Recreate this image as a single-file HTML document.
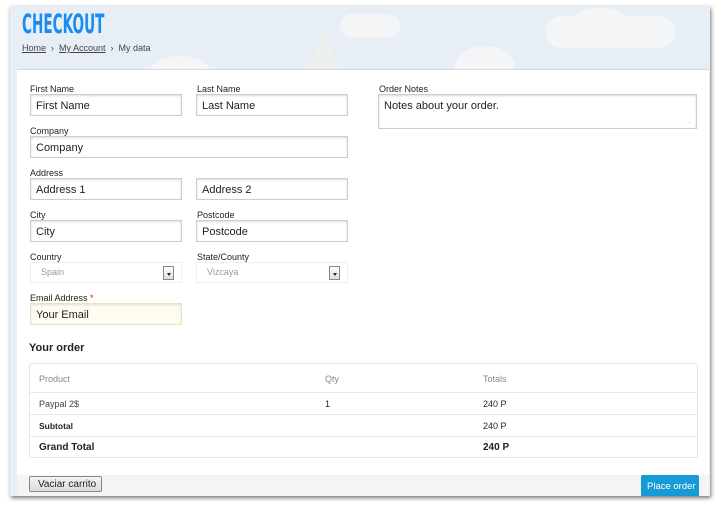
<!DOCTYPE html>
<html><head><style>
*{margin:0;padding:0;box-sizing:border-box}
body{width:720px;height:508px;background:#fff;font-family:"Liberation Sans",Arial,sans-serif;position:relative;overflow:hidden;font-size:9px;color:#222}
.win{position:absolute;left:10px;top:6px;width:700px;height:490px;background:#e8eef5;box-shadow:1px 2px 4px rgba(0,0,0,.55)}
.cloud{position:absolute;background:#f3f5f6;border-radius:20px}
.main{position:absolute;left:17px;top:69px;width:692px;height:427px;background:#fff;border-top:1px solid #d5dbe2}
.a{position:absolute}
h1{position:absolute;left:22px;top:10px;font-size:27px;line-height:30px;color:#1a8cf0;font-family:"DejaVu Sans Condensed","Liberation Sans Narrow",sans-serif;font-weight:bold;transform:scaleX(0.56);transform-origin:left top}
.bc{position:absolute;left:22px;top:43px;font-size:9px;color:#444}
.bc u{color:#444}
label{position:absolute;font-size:9px;color:#222}
.in{position:absolute;height:22px;border:1px solid #ccc;box-shadow:inset 0 1px 2px #ddd;font-size:11px;padding:5px 0 0 5px;color:#222;background:#fff}
.sel{position:absolute;height:21px;border:1px solid #eee;font-size:9px;color:#999;padding:4px 0 0 10px}
.sel b{position:absolute;right:7px;top:3px;width:11px;height:14px;border:1px solid #888;background:linear-gradient(#fff,#ddd)}
.sel b:after{content:"";position:absolute;left:3px;top:6px;border:2px solid transparent;border-top:3px solid #222}
.tbl{position:absolute;left:29px;top:363px;width:669px;height:95px;border:1px solid #e4e4e4;border-radius:3px}
.row{position:absolute;left:0;width:667px;border-top:1px solid #e8e8e8;font-size:9px}
.c{position:absolute}
</style></head><body>
<div class="win">
<div class="cloud" style="left:535px;top:10px;width:130px;height:32px"></div>
<div class="cloud" style="left:565px;top:2px;width:50px;height:20px;border-radius:50%"></div>
<div class="cloud" style="left:330px;top:8px;width:60px;height:24px"></div>
<div class="cloud" style="left:445px;top:40px;width:60px;height:40px;border-radius:50%"></div>
<div class="cloud" style="left:140px;top:50px;width:60px;height:30px;border-radius:50%"></div>
<div style="position:absolute;left:300px;top:22px;width:0;height:0;border-left:14px solid transparent;border-right:14px solid transparent;border-bottom:40px solid #eef0f0"></div>
</div>
<h1>CHECKOUT</h1>
<div class="bc"><u>Home</u> &nbsp;›&nbsp; <u>My Account</u> &nbsp;›&nbsp; My data</div>
<div class="main"></div>

<label style="left:30px;top:84px">First Name</label>
<div class="in" style="left:30px;top:94px;width:152px">First Name</div>
<label style="left:197px;top:84px">Last Name</label>
<div class="in" style="left:196px;top:94px;width:152px">Last Name</div>
<label style="left:379px;top:84px">Order Notes</label>
<div class="in" style="left:378px;top:94px;width:319px;height:35px">Notes about your order.<span style="position:absolute;right:5px;bottom:3px;font-size:6px;color:#aaa">.:</span></div>

<label style="left:30px;top:126px">Company</label>
<div class="in" style="left:30px;top:136px;width:318px">Company</div>

<label style="left:30px;top:168px">Address</label>
<div class="in" style="left:30px;top:178px;width:152px">Address 1</div>
<div class="in" style="left:196px;top:178px;width:152px">Address 2</div>

<label style="left:30px;top:210px">City</label>
<div class="in" style="left:30px;top:220px;width:152px">City</div>
<label style="left:197px;top:210px">Postcode</label>
<div class="in" style="left:196px;top:220px;width:152px">Postcode</div>

<label style="left:30px;top:252px">Country</label>
<div class="sel" style="left:30px;top:262px;width:152px">Spain<b></b></div>
<label style="left:197px;top:252px">State/County</label>
<div class="sel" style="left:196px;top:262px;width:152px">Vizcaya<b></b></div>

<label style="left:30px;top:293px">Email Address <span style="color:#d22">*</span></label>
<div class="in" style="left:30px;top:303px;width:152px;background:#fffdf0;border-color:#e8e4c0">Your Email</div>

<div class="a" style="left:29px;top:342px;font-size:11px;font-weight:bold">Your order</div>
<div class="tbl">
 <div class="c" style="left:9px;top:10px;color:#888">Product</div>
 <div class="c" style="left:295px;top:10px;color:#888">Qty</div>
 <div class="c" style="left:453px;top:10px;color:#888">Totals</div>
 <div class="row" style="top:28px;height:22px"><span class="c" style="left:9px;top:6px;color:#444">Paypal 2$</span><span class="c" style="left:295px;top:6px">1</span><span class="c" style="left:453px;top:6px">240 P</span></div>
 <div class="row" style="top:50px;height:22px;font-weight:bold"><span class="c" style="left:9px;top:6px;font-size:8.5px">Subtotal</span><span class="c" style="left:453px;top:6px;font-weight:normal">240 P</span></div>
 <div class="row" style="top:72px;height:22px;font-weight:bold;font-size:10px"><span class="c" style="left:9px;top:5px">Grand Total</span><span class="c" style="left:453px;top:5px">240 P</span></div>
</div>

<div class="a" style="left:17px;top:475px;width:692px;height:21px;background:#f4f4f4"></div>
<div class="a" style="left:29px;top:476px;width:73px;height:16px;border:1px solid #888;border-radius:2px;background:linear-gradient(#f4f4f4,#dcdcdc);font-size:10px;padding:2px 0 0 8px;color:#222">Vaciar carrito</div>
<div class="a" style="left:641px;top:475px;width:58px;height:21px;background:#179bd7;color:#fff;font-size:9.5px;padding:6px 0 0 6px;border-radius:2px 2px 0 0">Place order</div>
</body></html>
